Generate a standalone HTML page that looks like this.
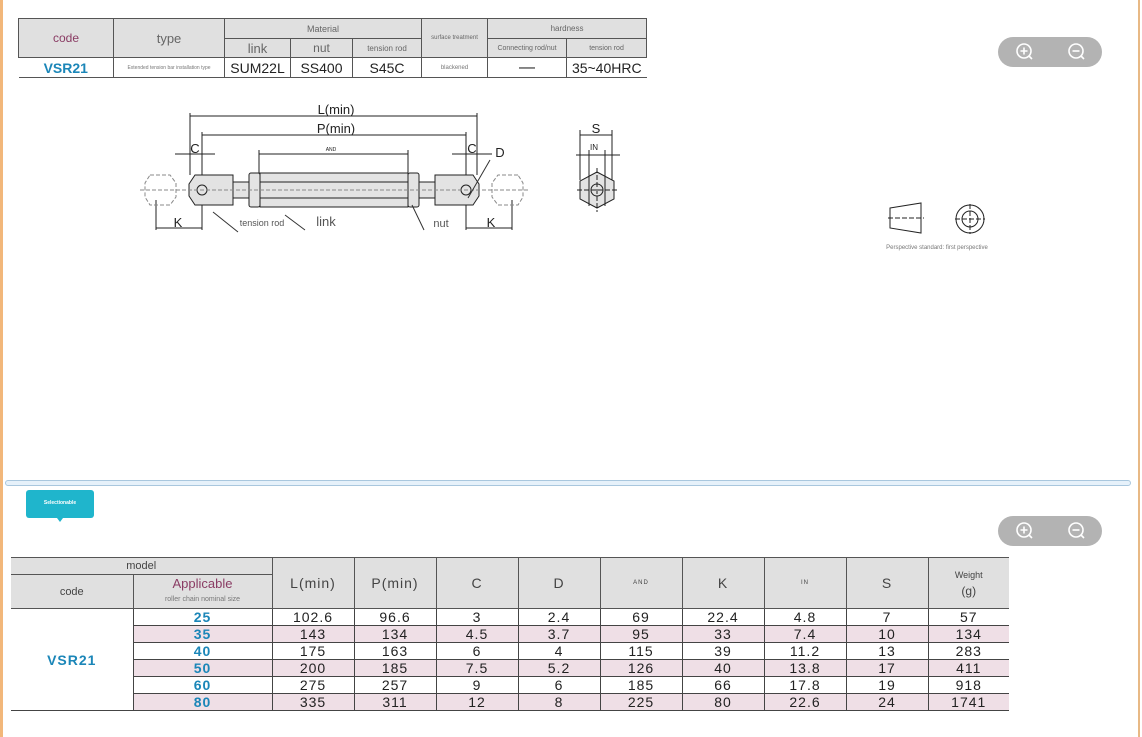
<!DOCTYPE html>
<html><head><meta charset="utf-8"><style>
body{margin:0;width:1142px;height:737px;background:#fff;position:relative;overflow:hidden;font-family:"Liberation Sans",Arial,sans-serif;}
.abs{position:absolute}
table{border-collapse:collapse;position:absolute;table-layout:fixed}
td{padding:0;text-align:center;color:#222;overflow:hidden;white-space:nowrap}
#t1 td{border:1px solid #555;}
#t1 .h{background:#e0e0e0;color:#666}
#t2 td{border-left:1px solid #444;border-right:1px solid #444;font-size:14px;letter-spacing:1px;line-height:16px}
#t2 .h{background:#e0e0e0;color:#444;border:1px solid #555}
#t2 tr.p td.d{background:#efdfe6}
#t2 tr.r td{border-bottom:1px solid #444}
.blue{color:#1b86b8;font-weight:bold}
.zb{position:absolute;width:104px;height:30px;border-radius:15px;background:#b3b3b3}
</style></head><body>
<div class="abs" style="left:0;top:0;width:3px;height:737px;background:#f2b77a"></div>
<div class="abs" style="left:1138px;top:0;width:2px;height:737px;background:#e8b985"></div>

<table id="t1" style="left:18px;top:18px;width:628px">
<colgroup><col style="width:95px"><col style="width:111px"><col style="width:66px"><col style="width:62px"><col style="width:69px"><col style="width:66px"><col style="width:79px"><col style="width:80px"></colgroup>
<tr style="height:20px"><td class="h" rowspan="2" style="color:#8a3c64;font-size:12px">code</td><td class="h" rowspan="2" style="font-size:13px">type</td><td class="h" colspan="3" style="font-size:9px">Material</td><td class="h" rowspan="2" style="font-size:6px">surface treatment</td><td class="h" colspan="2" style="font-size:8px">hardness</td></tr>
<tr style="height:19px"><td class="h" style="font-size:13px">link</td><td class="h" style="font-size:12px">nut</td><td class="h" style="font-size:8px">tension rod</td><td class="h" style="font-size:7px">Connecting rod/nut</td><td class="h" style="font-size:7px">tension rod</td></tr>
<tr style="height:20px"><td class="blue" style="font-size:14px;border-left:none">VSR21</td><td style="font-size:5px;color:#777">Extended tension bar installation type</td><td style="font-size:14px">SUM22L</td><td style="font-size:14px">SS400</td><td style="font-size:14px">S45C</td><td style="font-size:6px;color:#777">blackened</td><td>—</td><td style="font-size:14px;border-right:none">35~40HRC</td></tr>
</table>

<div class="zb" style="left:998px;top:37px"></div>
<div class="zb" style="left:998px;top:516px"></div>
<svg class="abs" style="left:998px;top:37px" width="104" height="30"><g fill="none" stroke="#fff" stroke-width="1.6"><circle cx="26" cy="14" r="7"/><line x1="31" y1="19" x2="34" y2="22"/><path d="M22.5 14h7M26 10.5v7"/><circle cx="78" cy="14" r="7"/><line x1="83" y1="19" x2="86" y2="22"/><path d="M74.5 14h7"/></g></svg>
<svg class="abs" style="left:998px;top:516px" width="104" height="30"><g fill="none" stroke="#fff" stroke-width="1.6"><circle cx="26" cy="14" r="7"/><line x1="31" y1="19" x2="34" y2="22"/><path d="M22.5 14h7M26 10.5v7"/><circle cx="78" cy="14" r="7"/><line x1="83" y1="19" x2="86" y2="22"/><path d="M74.5 14h7"/></g></svg>

<svg class="abs" style="left:0;top:0" width="1142" height="270" font-family="Liberation Sans, Arial, sans-serif">
<g stroke="#222" stroke-width="1" fill="none">
<line x1="190" y1="116" x2="477" y2="116"/><line x1="202" y1="135" x2="466" y2="135"/>
<line x1="259" y1="154" x2="408" y2="154"/>
<line x1="190" y1="113" x2="190" y2="175"/><line x1="477" y1="113" x2="477" y2="175"/>
<line x1="202" y1="132" x2="202" y2="230"/><line x1="466" y1="132" x2="466" y2="230"/>
<line x1="259" y1="150" x2="259" y2="175"/><line x1="408" y1="150" x2="408" y2="175"/>
<line x1="175" y1="154" x2="215" y2="154"/><line x1="452" y1="154" x2="492" y2="154"/>
<line x1="156" y1="228" x2="202" y2="228"/><line x1="466" y1="228" x2="512" y2="228"/>
<line x1="156" y1="200" x2="156" y2="230"/><line x1="512" y1="200" x2="512" y2="230"/>
</g>
<g stroke="#222" fill="#e3e3e3">
<path d="M195 175h38v30h-38l-6-9v-12z"/><rect x="233" y="182" width="16" height="16"/>
<rect x="249" y="173" width="11" height="34" rx="2"/><rect x="260" y="173" width="148" height="34"/>
<rect x="408" y="173" width="11" height="34" rx="2"/><rect x="419" y="182" width="16" height="16"/>
<path d="M435 175h38l6 9v12l-6 9h-38z"/>
<path d="M597 172l17 9v18l-17 9l-17-9v-18z"/>
</g>
<g stroke="#222" fill="none"><circle cx="202" cy="190" r="5"/><circle cx="466" cy="190" r="5"/><circle cx="597" cy="190" r="6"/>
<line x1="260" y1="182" x2="408" y2="182"/><line x1="260" y1="198" x2="408" y2="198"/>
<line x1="576" y1="155" x2="620" y2="155"/><line x1="580" y1="135" x2="612" y2="135"/>
<line x1="589" y1="150" x2="589" y2="206"/><line x1="605" y1="150" x2="605" y2="206"/><line x1="580" y1="130" x2="580" y2="180"/><line x1="612" y1="130" x2="612" y2="180"/>
<path d="M577 190h40M597 168v44" stroke-dasharray="5 2"/>
<path d="M890 208l31-5v30l-31-5z"/><circle cx="970" cy="219" r="14"/><circle cx="970" cy="219" r="8"/>
<path d="M888 218h36M955 219h30M970 204v30" stroke-dasharray="5 2"/>
</g>
<g stroke="#888" fill="none" stroke-dasharray="4 2"><path d="M140 190h390"/><path d="M150 175h20l6 8v14l-6 8h-20l-5-8v-14z"/><path d="M518 175h-20l-6 8v14l6 8h20l5-8v-14z"/></g>
<g stroke="#333" fill="none"><path d="M213 212l25 20M285 215l20 15M412 205l12 25M468 198l22-38"/></g>
<g fill="#222" font-size="13" text-anchor="middle">
<text x="336" y="114">L(min)</text><text x="336" y="133">P(min)</text>
<text x="195" y="153">C</text><text x="472" y="153">C</text><text x="500" y="157">D</text>
<text x="178" y="227">K</text><text x="491" y="227">K</text>
<text x="596" y="133">S</text><text x="594" y="150" font-size="8">IN</text>
<text x="331" y="151" font-size="5">AND</text>
<text x="262" y="226" font-size="9" fill="#555">tension rod</text><text x="326" y="226" fill="#555">link</text><text x="441" y="227" font-size="11" fill="#555">nut</text>
<text x="937" y="249" font-size="6" fill="#777">Perspective standard: first perspective</text>
</g>
</svg>

<div class="abs" style="left:5px;top:480px;width:1124px;height:4px;border:1px solid #a9c7de;border-radius:3px;background:#e6f1fa"></div>
<div class="abs" style="left:26px;top:490px;width:68px;height:28px;background:#1fb5cc;border-radius:3px;color:#fff;font-size:5px;font-weight:bold;text-align:center;line-height:26px">Selectionable</div>
<div class="abs" style="left:57px;top:518px;width:0;height:0;border-left:3px solid transparent;border-right:3px solid transparent;border-top:4px solid #1fb5cc"></div>

<table id="t2" style="left:11px;top:557px;width:998px">
<colgroup><col style="width:122px"><col style="width:139px"><col style="width:82px"><col style="width:82px"><col style="width:82px"><col style="width:82px"><col style="width:82px"><col style="width:82px"><col style="width:82px"><col style="width:82px"><col style="width:81px"></colgroup>
<tr style="height:17px"><td class="h" colspan="2" style="font-size:11px;letter-spacing:0;border-left:none">model</td><td class="h" rowspan="2">L(min)</td><td class="h" rowspan="2">P(min)</td><td class="h" rowspan="2">C</td><td class="h" rowspan="2">D</td><td class="h" rowspan="2" style="font-size:6px">AND</td><td class="h" rowspan="2">K</td><td class="h" rowspan="2" style="font-size:6px">IN</td><td class="h" rowspan="2">S</td><td class="h" rowspan="2" style="font-size:9px;letter-spacing:0;line-height:16px;border-right:none">Weight<br><span style="font-size:12px">(g)</span></td></tr>
<tr style="height:34px"><td class="h" style="font-size:11px;letter-spacing:0;border-left:none">code</td><td class="h" style="letter-spacing:0;line-height:13px"><span style="color:#8a3c64;font-size:13px">Applicable</span><br><span style="font-size:7px;color:#777">roller chain nominal size</span></td></tr>
<tr class="r" style="height:17px"><td rowspan="6" class="blue" style="font-size:14px;border-left:none;border-bottom:1px solid #444">VSR21</td><td class="d blue">25</td><td class="d">102.6</td><td class="d">96.6</td><td class="d">3</td><td class="d">2.4</td><td class="d">69</td><td class="d">22.4</td><td class="d">4.8</td><td class="d">7</td><td class="d" style="border-right:none">57</td></tr>
<tr class="r p" style="height:17px"><td class="d blue">35</td><td class="d">143</td><td class="d">134</td><td class="d">4.5</td><td class="d">3.7</td><td class="d">95</td><td class="d">33</td><td class="d">7.4</td><td class="d">10</td><td class="d" style="border-right:none">134</td></tr>
<tr class="r" style="height:16px"><td class="d blue">40</td><td class="d">175</td><td class="d">163</td><td class="d">6</td><td class="d">4</td><td class="d">115</td><td class="d">39</td><td class="d">11.2</td><td class="d">13</td><td class="d" style="border-right:none">283</td></tr>
<tr class="r p" style="height:17px"><td class="d blue">50</td><td class="d">200</td><td class="d">185</td><td class="d">7.5</td><td class="d">5.2</td><td class="d">126</td><td class="d">40</td><td class="d">13.8</td><td class="d">17</td><td class="d" style="border-right:none">411</td></tr>
<tr class="r" style="height:17px"><td class="d blue">60</td><td class="d">275</td><td class="d">257</td><td class="d">9</td><td class="d">6</td><td class="d">185</td><td class="d">66</td><td class="d">17.8</td><td class="d">19</td><td class="d" style="border-right:none">918</td></tr>
<tr class="r p" style="height:17px"><td class="d blue">80</td><td class="d">335</td><td class="d">311</td><td class="d">12</td><td class="d">8</td><td class="d">225</td><td class="d">80</td><td class="d">22.6</td><td class="d">24</td><td class="d" style="border-right:none">1741</td></tr>
</table>
</body></html>
